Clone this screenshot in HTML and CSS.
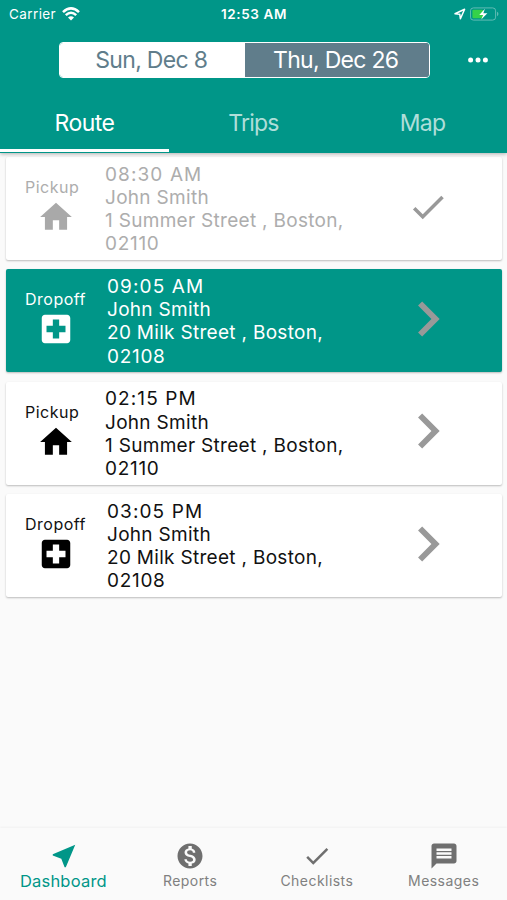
FILE: index.html
```html
<!DOCTYPE html>
<html lang="en">
  <head>
    <meta charset="utf-8">
    <title>Dashboard</title>
    <link rel="stylesheet" href="styles.css">
  </head>
  <body>
    <div class="header">
      <div class="status-bar">
        <div class="status-left">
          <span class="carrier">Carrier</span>
          <svg class="wifi" viewBox="0 0 18 14" fill="none" stroke="#fff" stroke-width="2.5">
            <path d="M1 5.2Q9-2.4 17 5.2M3.8 8.2Q9 3.2 14.2 8.2"/>
            <path d="M6 10.6Q9 7.7 12 10.6L9 13.6z" fill="#fff" stroke="none"/>
          </svg>
        </div>
        <div class="status-time">12:53 AM</div>
        <div class="status-right">
          <svg class="location" viewBox="0 0 12 12"><path d="M1 5.8L10.6 1.2 6.4 10.8 5.8 6.3z" fill="none" stroke="#fff" stroke-width="1.5" stroke-linejoin="round"/></svg>
          <svg class="battery" viewBox="0 0 30 14">
            <rect x=".5" y=".7" width="26" height="12.6" rx="3" fill="none" stroke="#65beb6"/>
            <rect x="2.5" y="2.7" width="11" height="8.6" rx="1" fill="#35d149"/>
            <path d="M28 4.8v4.4q1.4-.7 1.4-2.2T28 4.8z" fill="#65beb6"/>
            <path d="M15.4 1.6L9.6 8h4l-2 4.7L18 6.2h-4.2z" fill="#fff"/>
          </svg>
        </div>
      </div>

      <div class="date-row">
        <div class="dates">
          <div class="date">Sun, Dec 8</div>
          <div class="date selected">Thu, Dec 26</div>
        </div>
        <svg class="more" viewBox="0 0 20 6" fill="#fff"><circle cx="2.6" cy="3" r="2.5"/><circle cx="10" cy="3" r="2.5"/><circle cx="17.4" cy="3" r="2.5"/></svg>
      </div>

      <div class="tabs">
        <div class="tab active">Route</div>
        <div class="tab">Trips</div>
        <div class="tab">Map</div>
      </div>
    </div>

    <div class="stops">
      <div class="stop done">
        <div class="kind">
          <div class="kind-label">Pickup</div>
          <svg class="kind-icon" viewBox="0 0 24 24"><path d="M10 20v-6h4v6h5v-8h3L12 3 2 12h3v8z"/></svg>
        </div>
        <div class="details">
          <div class="time">08:30 AM</div>
          <div>John Smith</div>
          <div>1 Summer Street , Boston,</div>
          <div class="zip">02110</div>
        </div>
        <div class="action"><svg class="check" viewBox="0 0 24 24"><path d="M9 16.17L4.83 12l-1.42 1.41L9 19 21 7l-1.41-1.41z"/></svg></div>
      </div>

      <div class="stop dropoff current">
        <div class="kind">
          <div class="kind-label">Dropoff</div>
          <svg class="kind-icon" viewBox="0 0 24 24"><path d="M19 3H5c-1.1 0-1.99.9-1.99 2L3 19c0 1.1.9 2 2 2h14c1.1 0 2-.9 2-2V5c0-1.1-.9-2-2-2zm-1 11h-4v4h-4v-4H6v-4h4V6h4v4h4v4z"/></svg>
        </div>
        <div class="details">
          <div class="time">09:05 AM</div>
          <div>John Smith</div>
          <div>20 Milk Street , Boston,</div>
          <div class="zip">02108</div>
        </div>
        <div class="action"><svg class="chevron" viewBox="0 0 24 24"><path d="M10 6L8.59 7.41 13.17 12l-4.58 4.59L10 18l6-6z"/></svg></div>
      </div>

      <div class="stop">
        <div class="kind">
          <div class="kind-label">Pickup</div>
          <svg class="kind-icon" viewBox="0 0 24 24"><path d="M10 20v-6h4v6h5v-8h3L12 3 2 12h3v8z"/></svg>
        </div>
        <div class="details">
          <div class="time">02:15 PM</div>
          <div>John Smith</div>
          <div>1 Summer Street , Boston,</div>
          <div class="zip">02110</div>
        </div>
        <div class="action"><svg class="chevron" viewBox="0 0 24 24"><path d="M10 6L8.59 7.41 13.17 12l-4.58 4.59L10 18l6-6z"/></svg></div>
      </div>

      <div class="stop dropoff">
        <div class="kind">
          <div class="kind-label">Dropoff</div>
          <svg class="kind-icon" viewBox="0 0 24 24"><path d="M19 3H5c-1.1 0-1.99.9-1.99 2L3 19c0 1.1.9 2 2 2h14c1.1 0 2-.9 2-2V5c0-1.1-.9-2-2-2zm-1 11h-4v4h-4v-4H6v-4h4V6h4v4h4v4z"/></svg>
        </div>
        <div class="details">
          <div class="time">03:05 PM</div>
          <div>John Smith</div>
          <div>20 Milk Street , Boston,</div>
          <div class="zip">02108</div>
        </div>
        <div class="action"><svg class="chevron" viewBox="0 0 24 24"><path d="M10 6L8.59 7.41 13.17 12l-4.58 4.59L10 18l6-6z"/></svg></div>
      </div>
    </div>

    <div class="bottom-nav">
      <div class="nav-item active">
        <svg class="nav-icon" viewBox="0 0 24 24"><path d="M21 3L3 10.53v.98l6.84 2.65L12.48 21h.98L21 3z"/></svg>
        <div class="nav-label">Dashboard</div>
      </div>
      <div class="nav-item">
        <svg class="nav-icon" viewBox="0 0 24 24"><path d="M12 2C6.48 2 2 6.48 2 12s4.48 10 10 10 10-4.48 10-10S17.52 2 12 2zm1.41 16.09V20h-2.67v-1.93c-1.71-.36-3.16-1.46-3.27-3.4h1.96c.1 1.05.82 1.87 2.65 1.87 1.96 0 2.4-.98 2.4-1.59 0-.83-.44-1.61-2.67-2.14-2.48-.6-4.18-1.62-4.18-3.67 0-1.72 1.39-2.84 3.11-3.21V4h2.67v1.95c1.86.45 2.79 1.86 2.85 3.39H14.3c-.05-1.11-.64-1.87-2.22-1.87-1.5 0-2.4.68-2.4 1.64 0 .84.65 1.39 2.67 1.91s4.18 1.39 4.18 3.91c-.01 1.83-1.38 2.83-3.12 3.16z"/></svg>
        <div class="nav-label">Reports</div>
      </div>
      <div class="nav-item">
        <svg class="nav-icon" viewBox="0 0 24 24"><path d="M9 16.17L4.83 12l-1.42 1.41L9 19 21 7l-1.41-1.41z"/></svg>
        <div class="nav-label">Checklists</div>
      </div>
      <div class="nav-item">
        <svg class="nav-icon" viewBox="0 0 24 24"><path d="M20 2H4c-1.1 0-1.99.9-1.99 2L2 22l4-4h14c1.1 0 2-.9 2-2V4c0-1.1-.9-2-2-2zm-2 12H6v-2h12v2zm0-3H6V9h12v2zm0-3H6V6h12v2z"/></svg>
        <div class="nav-label">Messages</div>
      </div>
    </div>
  </body>
</html>
```
FILE: styles.css
```css
* {
    box-sizing: border-box;
}

body {
    margin: 0;
    height: 900px;
    display: flex;
    flex-direction: column;
    background-color: #fafafa;
    font-family: Inter, "Liberation Sans", sans-serif;
    overflow: hidden;
}

svg {
    display: block;
    flex: none;
}

.header {
    position: relative;
    z-index: 1;
    height: 152.5px;
    flex: none;
    background-color: #009688;
    color: white;
    box-shadow: 0 1px 4px rgba(0, 0, 0, 0.3);
}

.status-bar {
    display: grid;
    grid-template-columns: 1fr auto 1fr;
    align-items: center;
    height: 28px;
    padding: 0 8px 0 9px;
    font-size: 13.5px;
}

.status-left {
    display: flex;
    align-items: center;
    gap: 6px;
}

.carrier {
    letter-spacing: 0.4px;
}

.wifi {
    width: 18px;
    height: 14px;
}

.status-time {
    font-weight: 600;
    letter-spacing: 0.6px;
}

.status-right {
    display: flex;
    align-items: center;
    justify-content: flex-end;
    gap: 4px;
}

.location {
    width: 12px;
    height: 12px;
}

.battery {
    width: 29px;
    height: 14px;
}

.date-row {
    display: flex;
    align-items: center;
    justify-content: space-between;
    height: 36px;
    margin-top: 13.5px;
    padding: 0 19px 0 59px;
}

.dates {
    display: grid;
    grid-template-columns: 1fr 1fr;
    width: 371px;
    height: 36px;
    border: 1px solid white;
    border-radius: 4px;
    overflow: hidden;
}

.date {
    padding-right: 2px;
    background-color: white;
    color: #607d8b;
    font-size: 23px;
    line-height: 34px;
    letter-spacing: -0.7px;
    text-align: center;
}

.date.selected {
    background-color: #607d8b;
    color: white;
}

.more {
    width: 20px;
    height: 6px;
}

.tabs {
    display: grid;
    grid-template-columns: repeat(3, 1fr);
    height: 74px;
}

.tab {
    padding-top: 31px;
    border-bottom: 3px solid transparent;
    color: rgba(255, 255, 255, 0.7);
    font-size: 23px;
    line-height: 29px;
    letter-spacing: -0.8px;
    text-align: center;
}

.tab.active {
    color: white;
    border-bottom-color: white;
    letter-spacing: -0.5px;
}

.stops {
    flex: 1;
    display: flex;
    flex-direction: column;
    gap: 9.4px;
    padding: 4.5px 5px 0 6px;
}

.stop {
    display: flex;
    height: 103px;
    padding-left: 19px;
    background-color: white;
    border-radius: 2px;
    box-shadow: 0 1px 2px rgba(0, 0, 0, 0.25);
    color: #111;
    fill: black;
}

.stop.done {
    color: #adadad;
    fill: #a9a9a9;
}

.stop.current {
    background-color: #009688;
    color: white;
    fill: white;
}

.kind {
    width: 80px;
    padding-top: 20px;
}

.dropoff .kind {
    width: 82px;
}

.kind-label {
    font-size: 16px;
    line-height: 21px;
    letter-spacing: 0.5px;
}

.kind-icon {
    width: 38px;
    height: 38px;
    margin-left: 12px;
}

.details {
    width: 250px;
    padding-top: 5.6px;
    font-size: 19px;
    line-height: 23.2px;
    letter-spacing: 0.3px;
    white-space: nowrap;
}

.time {
    letter-spacing: 1.1px;
}

.zip {
    letter-spacing: 0.7px;
}

.action {
    flex: 1;
    display: flex;
    align-items: center;
    justify-content: center;
    padding: 0 1px 4px 0;
    margin-left: -1px;
    fill: #999;
}

.dropoff .action {
    margin-left: -3px;
}

.check {
    width: 42px;
    height: 42px;
}

.chevron {
    width: 70px;
    height: 70px;
}

.bottom-nav {
    display: grid;
    grid-template-columns: repeat(4, 1fr);
    height: 72px;
    flex: none;
    box-shadow: 0 -1px 2px rgba(0, 0, 0, 0.04);
}

.nav-item {
    display: flex;
    flex-direction: column;
    align-items: center;
    padding-top: 12.5px;
    color: #808080;
    fill: #6f6f6f;
    font-size: 14px;
    letter-spacing: 0.45px;
}

.nav-item.active {
    color: #009688;
    fill: #009688;
    font-size: 16.5px;
    letter-spacing: 0.2px;
}

.nav-icon {
    width: 30px;
    height: 30px;
}

.nav-label {
    line-height: 20px;
}

.active .nav-icon {
    margin-left: 2px;
}
```
